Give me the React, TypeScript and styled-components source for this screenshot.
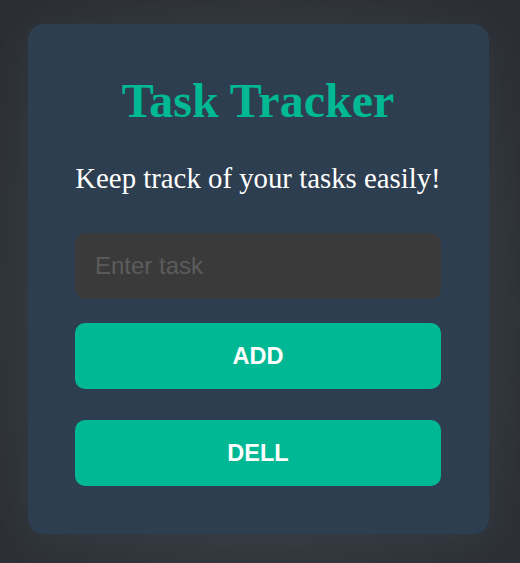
import React from "react";
import styled, { createGlobalStyle } from "styled-components";

const GlobalStyle = createGlobalStyle`
  html, body {
    margin: 0;
    padding: 0;
    height: 100%;
  }
  body {
    min-height: 563px;
    background: radial-gradient(ellipse at 50% 55%, #3a4047 0%, #33383e 55%, #2a2d33 100%);
    font-family: "Liberation Serif", "Times New Roman", serif;
  }
`;

const Page = styled.main`
  display: flex;
  justify-content: center;
  align-items: flex-start;
  padding-top: 24px;
  padding-right: 3px;
  box-sizing: border-box;
  min-height: 563px;
`;

const Card = styled.section`
  width: 461px;
  box-sizing: border-box;
  padding: 0 48px 48px 47px;
  background: #2d3e50;
  border-radius: 16px;
  box-shadow: 0 6px 30px rgba(60, 68, 76, 0.35);
  display: flex;
  flex-direction: column;
  align-items: stretch;
`;

const Title = styled.h1`
  margin: 49px 0 0;
  font-family: "Liberation Serif", "Times New Roman", serif;
  font-weight: 700;
  font-size: 48px;
  line-height: 55px;
  color: #00b894;
  text-align: center;
`;

const Subtitle = styled.p`
  margin: 34px 0 0;
  font-family: "Liberation Serif", "Times New Roman", serif;
  font-size: 28.8px;
  line-height: 33px;
  color: #ffffff;
  text-align: center;
  white-space: nowrap;
`;

const TaskInput = styled.input`
  margin-top: 38px;
  height: 66px;
  box-sizing: border-box;
  padding: 0 20px;
  border: none;
  outline: none;
  border-radius: 10px;
  background: #3a3a3a;
  color: #dddddd;
  font-family: "Liberation Sans", Arial, sans-serif;
  font-size: 24px;
  &::placeholder {
    color: #5c5c5c;
  }
`;

const ActionButton = styled.button<{ $gap: number }>`
  margin-top: ${(p) => p.$gap}px;
  height: 66px;
  border: none;
  border-radius: 10px;
  background: #00b894;
  color: #ffffff;
  font-family: "Liberation Sans", Arial, sans-serif;
  font-weight: 700;
  font-size: 23.5px;
  letter-spacing: 0;
  cursor: pointer;
`;

export default function App() {
  return (
    <>
      <GlobalStyle />
      <Page>
        <Card>
          <Title>Task Tracker</Title>
          <Subtitle>Keep track of your tasks easily!</Subtitle>
          <TaskInput placeholder="Enter task" />
          <ActionButton $gap={24}>ADD</ActionButton>
          <ActionButton $gap={31}>DELL</ActionButton>
        </Card>
      </Page>
    </>
  );
}
